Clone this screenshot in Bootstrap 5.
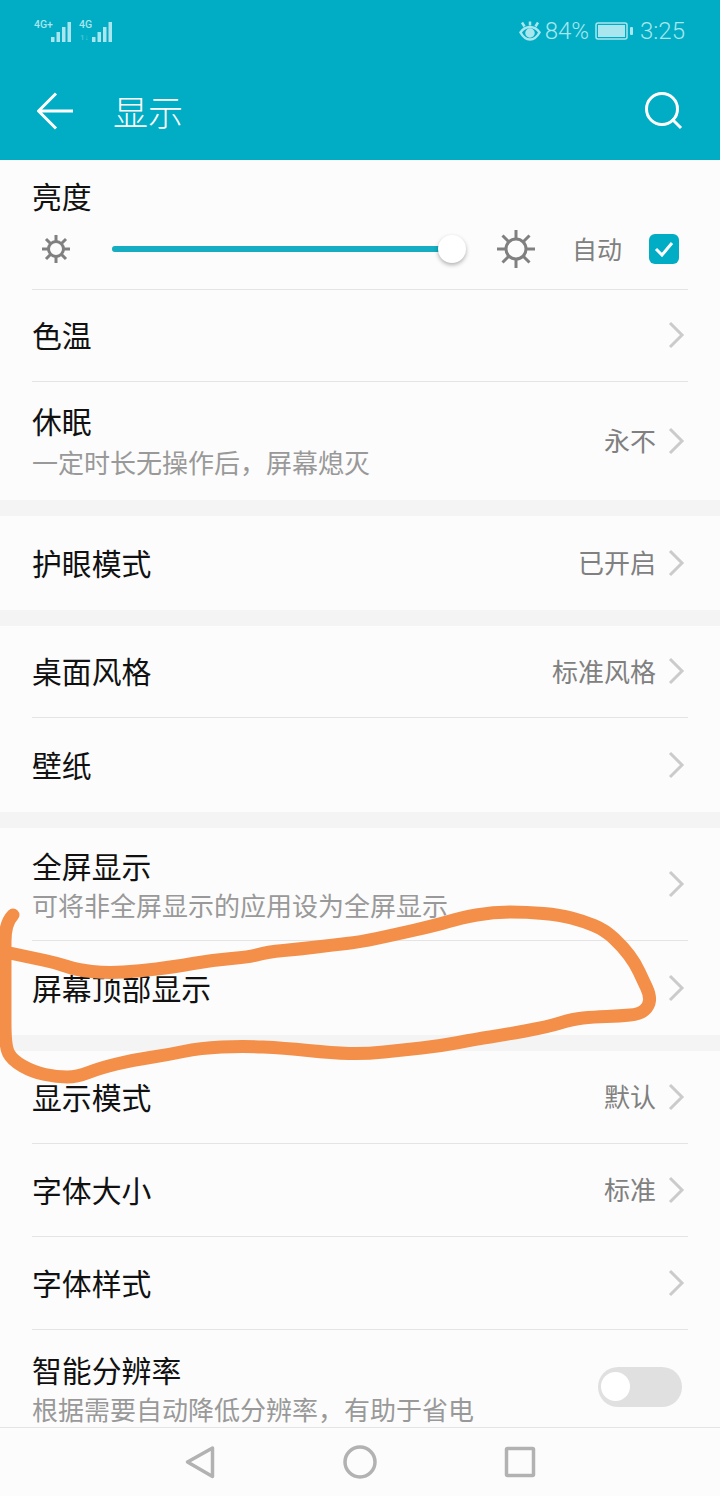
<!DOCTYPE html>
<html lang="zh-CN">
<head>
  <meta charset="UTF-8" />
  <title>显示</title>
  <link href="https://cdn.jsdelivr.net/npm/bootstrap@5.3.0/dist/css/bootstrap.min.css" rel="stylesheet">
  <style>
    body {
      background: #fcfcfc;
      font-family: "Noto Sans CJK SC", "Liberation Sans", sans-serif;
      color: #111;
    }

    .phone {
      width: 720px;
      height: 1496px;
      overflow: hidden;
    }

    .app-head {
      height: 160px;
      background: #00adc4;
      flex: none;
    }

    .status-bar {
      height: 64px;
      padding: 0 35px 2px 34px;
      color: #a9e6ee;
      font-family: Roboto, "Liberation Sans", sans-serif;
      font-weight: 300;
      font-size: 24px;
    }

    .stat-gap {
      margin-left: 6px;
    }

    .tool-bar {
      height: 96px;
      padding: 0 37px 2px;
      color: #fff;
    }

    .tool-title {
      font-size: 35px;
      font-weight: 300;
      margin-left: 39px;
    }

    .set-group {
      background: #fcfcfc;
    }

    .set-gap {
      height: 16px;
      background: #f4f4f4;
      flex: none;
    }

    .set-item {
      margin: 0 32px;
      height: 93px;
      border-bottom: 1px solid #e4e4e4;
    }

    .set-item.last-item {
      border-bottom: 0;
    }

    .h-92 { height: 92px; }
    .h-94 { height: 94px; }
    .h-113 { height: 113px; }
    .h-118 { height: 118px; }

    .item-name {
      font-size: 29.85px;
      line-height: 39px;
    }

    .set-item > .item-name {
      margin-top: -2px;
    }

    .item-sub {
      font-size: 26px;
      line-height: 39px;
      color: #999;
    }

    .two-line {
      padding-top: 1px;
    }

    .sleep-sub {
      line-height: 43px;
    }

    .item-val {
      font-size: 26px;
      color: #808080;
      margin: -3px 11px 0 0;
    }

    .chev {
      width: 18px;
      height: 28px;
      margin: -1px 3px 0 0;
      flex: none;
    }

    .bright-box {
      height: 130px;
      padding-top: 18px;
    }

    .bright-ctl {
      height: 40px;
      margin-top: 14px;
    }

    .sun-sm {
      width: 48px;
      height: 40px;
      flex: none;
    }

    .sun-lg {
      width: 40px;
      height: 40px;
      margin-left: 44px;
      flex: none;
    }

    .bright-track {
      width: 340px;
      height: 6px;
      margin-left: 32px;
      overflow: visible;
      border-radius: 3px;
      background: #e0e0e0;
      flex: none;
    }

    .bright-track .progress-bar {
      background: #14adc1;
      border-radius: 3px;
    }

    .bright-thumb {
      width: 28px;
      height: 28px;
      top: -11px;
      right: -14px;
      background: #fff;
      box-shadow: 0 2px 4px rgba(0, 0, 0, .3);
    }

    .auto-label {
      font-size: 25px;
      color: #808080;
      margin-left: 36px;
    }

    .auto-box {
      width: 30px;
      height: 30px;
      margin-left: 27px;
      border-radius: 6px;
      background: #00adc4;
      flex: none;
    }

    .res-row {
      height: 97px;
      padding-top: 20px;
    }

    .res-switch {
      width: 84px;
      height: 40px;
      border-radius: 20px;
      background: #e0e0e0;
      margin: -3px 6px 0 0;
      flex: none;
    }

    .res-knob {
      width: 29px;
      height: 29px;
      left: 3px;
      top: 5px;
      background: #fff;
    }

    .nav-foot {
      height: 69px;
      background: #fcfcfc;
      border-top: 1px solid #e4e4e4;
      flex: none;
    }

    .nav-foot svg {
      position: absolute;
      left: 0;
      top: 0;
    }

    .ink-layer {
      left: 0;
      top: 0;
      pointer-events: none;
    }
  </style>
</head>
<body>
  <div class="phone position-relative d-flex flex-column">
    <header class="app-head">
      <div class="status-bar d-flex align-items-center justify-content-between">
        <svg width="80" height="24" viewBox="0 0 80 24" fill="#a9e6ee" font-family="Roboto, sans-serif" font-weight="500">
          <text x="0" y="9" font-size="10.5">4G+</text>
          <rect x="17" y="18" width="3.500" height="5"/><rect x="22.500" y="13" width="3.500" height="10"/>
          <rect x="28" y="8" width="3.500" height="15"/><rect x="33.500" y="3" width="3.500" height="20"/>
          <text x="45" y="9" font-size="10.5">4G</text>
          <text x="46" y="21" font-size="8" opacity=".45">1↓</text>
          <rect x="58" y="18" width="3.500" height="5"/><rect x="63.500" y="13" width="3.500" height="10"/>
          <rect x="69" y="8" width="3.500" height="15"/><rect x="74.500" y="3" width="3.500" height="20"/>
        </svg>
        <div class="d-flex align-items-center">
          <svg width="22" height="20" viewBox="0 0 22 20" fill="none" stroke="#a9e6ee" stroke-width="2.500">
            <path d="M1.500 11.500C4 7.500 7 6 11 6s7 1.500 9.500 5.500C18 16 15 18.500 11 18.500S4 16 1.500 11.500Z"/>
            <circle cx="11" cy="12" r="3.500" fill="#a9e6ee"/>
            <path d="M3 1.500l2.500 4M11 .5v4M19 1.500l-2.500 4"/>
          </svg>
          <span class="ms-1">84%</span>
          <svg class="stat-gap" width="39" height="18" viewBox="0 0 39 18">
            <rect x="1" y="1" width="31" height="16" rx="2" fill="none" stroke="#a9e6ee" stroke-width="1.500"/>
            <rect x="3" y="3" width="27" height="12" fill="#a9e6ee"/>
            <rect x="35" y="5" width="3" height="8" rx="1" fill="#a9e6ee"/>
          </svg>
          <span class="stat-gap">3:25</span>
        </div>
      </div>
      <div class="tool-bar d-flex align-items-center">
        <svg width="37" height="38" viewBox="0 0 37 38" fill="none" stroke="#fff" stroke-width="3">
          <path d="M36 19H2M19 1.500 1.500 19 19 36.500"/>
        </svg>
        <span class="tool-title">显示</span>
        <svg class="ms-auto me-n1" width="40" height="38" viewBox="0 0 40 38" fill="none" stroke="#fff" stroke-width="3">
          <ellipse cx="19" cy="17" rx="15.500" ry="15.500"/>
          <path d="M29 27l9 9"/>
        </svg>
      </div>
    </header>

    <main class="flex-grow-1 overflow-hidden d-flex flex-column">
      <section class="set-group">
        <div class="set-item bright-box">
          <div class="item-name">亮度</div>
          <div class="bright-ctl d-flex align-items-center">
            <svg class="sun-sm" viewBox="0 0 48 40" fill="none" stroke="#808080" stroke-width="3">
              <circle cx="24" cy="20" r="7.500"/>
              <path d="M24 6v6M24 28v6M10 20h6M32 20h6M14 10l4.500 4.500M34 10l-4.500 4.500M14 30l4.500-4.500M34 30l-4.500-4.500"/>
            </svg>
            <div class="progress bright-track position-relative">
              <div class="progress-bar w-100"></div>
              <div class="bright-thumb position-absolute rounded-circle"></div>
            </div>
            <svg class="sun-lg" viewBox="0 0 40 40" fill="none" stroke="#808080" stroke-width="3">
              <circle cx="20" cy="20" r="10"/>
              <path d="M20 1v8M20 31v8M1 20h8M31 20h8M6.500 6.500l6 6M33.500 6.500l-6 6M6.500 33.500l6-6M33.500 33.500l-6-6"/>
            </svg>
            <span class="auto-label">自动</span>
            <div class="auto-box d-flex align-items-center justify-content-center">
              <svg width="20" height="16" viewBox="0 0 20 16" fill="none" stroke="#fff" stroke-width="3">
                <path d="M2 8l6 6L18 2"/>
              </svg>
            </div>
          </div>
        </div>
        <div class="set-item h-92 d-flex align-items-center">
          <span class="item-name me-auto">色温</span>
          <svg class="chev" viewBox="0 0 18 28" fill="none" stroke="#cbcbcb" stroke-width="3"><path d="M3 2l12 12L3 26"/></svg>
        </div>
        <div class="set-item last-item h-118 d-flex align-items-center">
          <div class="two-line me-auto">
            <div class="item-name">休眠</div>
            <div class="item-sub sleep-sub">一定时长无操作后，屏幕熄灭</div>
          </div>
          <span class="item-val">永不</span>
          <svg class="chev" viewBox="0 0 18 28" fill="none" stroke="#cbcbcb" stroke-width="3"><path d="M3 2l12 12L3 26"/></svg>
        </div>
      </section>
      <div class="set-gap"></div>

      <section class="set-group">
        <div class="set-item last-item h-94 d-flex align-items-center">
          <span class="item-name me-auto">护眼模式</span>
          <span class="item-val">已开启</span>
          <svg class="chev" viewBox="0 0 18 28" fill="none" stroke="#cbcbcb" stroke-width="3"><path d="M3 2l12 12L3 26"/></svg>
        </div>
      </section>
      <div class="set-gap"></div>

      <section class="set-group">
        <div class="set-item h-92 d-flex align-items-center">
          <span class="item-name me-auto">桌面风格</span>
          <span class="item-val">标准风格</span>
          <svg class="chev" viewBox="0 0 18 28" fill="none" stroke="#cbcbcb" stroke-width="3"><path d="M3 2l12 12L3 26"/></svg>
        </div>
        <div class="set-item last-item h-94 d-flex align-items-center">
          <span class="item-name me-auto">壁纸</span>
          <svg class="chev" viewBox="0 0 18 28" fill="none" stroke="#cbcbcb" stroke-width="3"><path d="M3 2l12 12L3 26"/></svg>
        </div>
      </section>
      <div class="set-gap"></div>

      <section class="set-group">
        <div class="set-item h-113 d-flex align-items-center">
          <div class="two-line me-auto">
            <div class="item-name">全屏显示</div>
            <div class="item-sub">可将非全屏显示的应用设为全屏显示</div>
          </div>
          <svg class="chev" viewBox="0 0 18 28" fill="none" stroke="#cbcbcb" stroke-width="3"><path d="M3 2l12 12L3 26"/></svg>
        </div>
        <div class="set-item last-item h-94 d-flex align-items-center">
          <span class="item-name me-auto">屏幕顶部显示</span>
          <svg class="chev" viewBox="0 0 18 28" fill="none" stroke="#cbcbcb" stroke-width="3"><path d="M3 2l12 12L3 26"/></svg>
        </div>
      </section>
      <div class="set-gap"></div>

      <section class="set-group">
        <div class="set-item d-flex align-items-center">
          <span class="item-name me-auto">显示模式</span>
          <span class="item-val">默认</span>
          <svg class="chev" viewBox="0 0 18 28" fill="none" stroke="#cbcbcb" stroke-width="3"><path d="M3 2l12 12L3 26"/></svg>
        </div>
        <div class="set-item d-flex align-items-center">
          <span class="item-name me-auto">字体大小</span>
          <span class="item-val">标准</span>
          <svg class="chev" viewBox="0 0 18 28" fill="none" stroke="#cbcbcb" stroke-width="3"><path d="M3 2l12 12L3 26"/></svg>
        </div>
        <div class="set-item d-flex align-items-center">
          <span class="item-name me-auto">字体样式</span>
          <svg class="chev" viewBox="0 0 18 28" fill="none" stroke="#cbcbcb" stroke-width="3"><path d="M3 2l12 12L3 26"/></svg>
        </div>
        <div class="set-item last-item res-row d-flex align-items-center">
          <div class="me-auto">
            <div class="item-name">智能分辨率</div>
            <div class="item-sub">根据需要自动降低分辨率，有助于省电</div>
          </div>
          <div class="res-switch position-relative">
            <div class="res-knob position-absolute rounded-circle"></div>
          </div>
        </div>
      </section>
    </main>

    <footer class="nav-foot position-relative">
      <svg width="720" height="69" viewBox="0 1427 720 69" fill="none" stroke="#b2b2b2" stroke-width="3.500" stroke-linejoin="round">
        <path d="M212.500 1447v28.500L187.500 1461Z"/>
        <ellipse cx="360" cy="1461" rx="15" ry="15"/>
        <rect x="506.500" y="1447.500" width="27" height="27" rx="1"/>
      </svg>
    </footer>

    <!-- the hand drawn loop someone put on the screenshot -->
    <svg class="ink-layer position-absolute" width="720" height="1496" viewBox="0 0 720 1496" fill="none" stroke="#f38f49" stroke-width="13" stroke-linecap="round" stroke-linejoin="round">
      <path id="inkLine"/>
    </svg>
  </div>
  <script src="https://cdn.jsdelivr.net/npm/bootstrap@5.3.0/dist/js/bootstrap.bundle.min.js"></script>
  <script>
    // trace of the stroke, smoothed through midpoints
    const pts = [[13,915],[5,923],[5,960],[5,1000],[5,1046],[12,1060],[33,1072],[57,1077],[77,1077],[100,1068],[133,1060],[167,1055],[200,1048],[243,1046],[283,1048],[333,1053],[365,1054],[403,1050],[440,1046],[477,1039],[503,1035],[547,1027],[573,1019],[593,1017],[620,1016],[640,1014],[649,1006],[650,995],[643,980],[635,963],[623,947],[605,930],[583,921],[560,915],[527,912],[493,912],[460,918],[437,925],[393,935],[360,942],[333,945],[300,949],[267,952],[250,957],[213,960],[173,967],[140,971],[107,973],[77,970],[57,963],[33,958],[5,952]];
    let d = `M${pts[0][0]} ${pts[0][1]}`;
    for (let i = 1; i < pts.length - 1; i++) {
      const mx = (pts[i][0] + pts[i + 1][0]) / 2;
      const my = (pts[i][1] + pts[i + 1][1]) / 2;
      d += `Q${pts[i][0]} ${pts[i][1]} ${mx} ${my}`;
    }
    d += `L${pts[pts.length - 1][0]} ${pts[pts.length - 1][1]}`;
    document.getElementById('inkLine').setAttribute('d', d);
  </script>
</body>
</html>
